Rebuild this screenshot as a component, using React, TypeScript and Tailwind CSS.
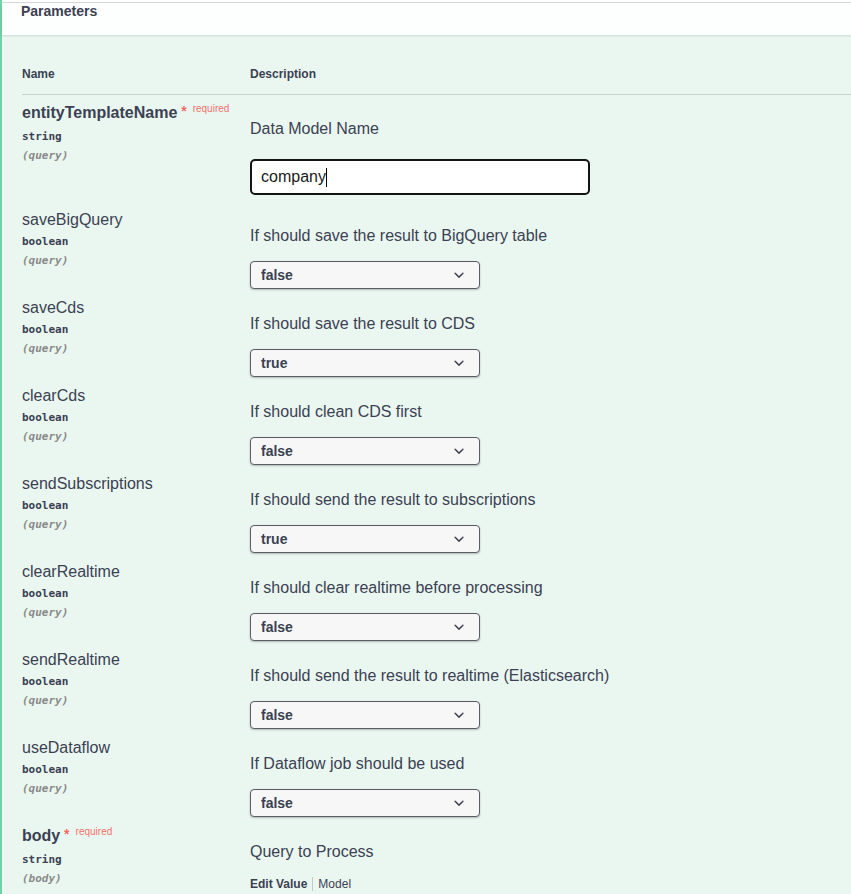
import React from "react";

type Row = { name: string; type: string; inn: string; desc: string; value: string };

const rows: Row[] = [
  { name: "saveBigQuery", type: "boolean", inn: "(query)", desc: "If should save the result to BigQuery table", value: "false" },
  { name: "saveCds", type: "boolean", inn: "(query)", desc: "If should save the result to CDS", value: "true" },
  { name: "clearCds", type: "boolean", inn: "(query)", desc: "If should clean CDS first", value: "false" },
  { name: "sendSubscriptions", type: "boolean", inn: "(query)", desc: "If should send the result to subscriptions", value: "true" },
  { name: "clearRealtime", type: "boolean", inn: "(query)", desc: "If should clear realtime before processing", value: "false" },
  { name: "sendRealtime", type: "boolean", inn: "(query)", desc: "If should send the result to realtime (Elasticsearch)", value: "false" },
  { name: "useDataflow", type: "boolean", inn: "(query)", desc: "If Dataflow job should be used", value: "false" },
];

const mono = "font-['DejaVu_Sans_Mono','Liberation_Mono',monospace]";

function NameCol({ name, type, inn, required }: { name: string; type: string; inn: string; required?: boolean }) {
  return (
    <div className="w-[228px] shrink-0">
      <div className={`text-[16px] leading-[20px] whitespace-nowrap ${required ? "font-bold" : ""}`}>
        {name}
        {required && (
          <>
            <span className="text-[rgba(255,0,0,0.6)] text-[14px] font-bold relative top-[-2px]">&nbsp;*</span>
            <span className="text-[rgba(255,0,0,0.6)] text-[10px] font-normal relative top-[-6px] pl-[6px]">required</span>
          </>
        )}
      </div>
      <div className={`${mono} text-[11px] leading-[16px] font-bold mt-[4px]`}>{type}</div>
      <div className={`${mono} text-[11px] leading-[16px] font-bold italic text-[#8a8a8a] mt-[3px]`}>{inn}</div>
    </div>
  );
}

function Select({ value }: { value: string }) {
  return (
    <div className="w-[230px] h-[28px] border border-[#5a5d66] rounded-[4px] bg-[#f7f7f7] shadow-[0_1px_2px_rgba(0,0,0,0.25)] flex items-center justify-between pl-[10px] pr-[10px]">
      <span className="text-[14px] font-bold leading-[16px]">{value}</span>
      <svg width="20" height="20" viewBox="0 0 20 20">
        <path
          fill="#3b4151"
          d="M13.418 7.859a.695.695 0 01.978 0 .68.68 0 010 .969l-3.908 3.83a.697.697 0 01-.979 0l-3.908-3.83a.68.68 0 010-.969.695.695 0 01.978 0L10 11l3.418-3.141z"
        />
      </svg>
    </div>
  );
}

export default function App() {
  return (
    <div className="w-[851px] h-[894px] overflow-hidden bg-white text-[#3b4151] font-['Liberation_Sans',Arial,sans-serif]">
      <div className="h-full border-l-2 border-[#6fd3a6] flex flex-col">
        <div className="h-[2px] bg-white" />
        <div className="h-[1px] bg-[#d9d9d9]" />
        <div className="h-[32px] bg-[#fdfefe] shadow-[0_1px_2px_rgba(0,0,0,0.12)] relative z-10 pl-[19px]">
          <div className="text-[14px] font-bold leading-[16px]">Parameters</div>
        </div>
        <div className="flex-1 bg-[#eaf7f1] pl-[20px]">
          <div className="pt-[31px] pb-[12px] border-b border-[#c6d3ce] flex text-[12px] font-bold leading-[16px]">
            <div className="w-[228px]">Name</div>
            <div>Description</div>
          </div>
          <div className="mt-[8px] flex h-[107px]">
            <NameCol name="entityTemplateName" type="string" inn="(query)" required />
            <div>
              <div className="text-[16px] leading-[20px] mt-[16px]">Data Model Name</div>
              <div className="mt-[20px] w-[340px] h-[36px] border-2 border-[#141414] rounded-[5px] bg-white flex items-center pl-[9px]">
                <span className="text-[16px] leading-[20px] text-[#1a1a1a]">company</span>
                <span className="w-[1px] h-[19px] bg-black" />
              </div>
            </div>
          </div>
          {rows.map((r) => (
            <div key={r.name} className="flex h-[88px]">
              <NameCol name={r.name} type={r.type} inn={r.inn} />
              <div>
                <div className="text-[16px] leading-[20px] mt-[16px] whitespace-nowrap">{r.desc}</div>
                <div className="mt-[15px]">
                  <Select value={r.value} />
                </div>
              </div>
            </div>
          ))}
          <div className="flex">
            <NameCol name="body" type="string" inn="(body)" required />
            <div>
              <div className="text-[16px] leading-[20px] mt-[16px]">Query to Process</div>
              <div className="mt-[14px] flex items-center text-[12px] leading-[16px]">
                <span className="font-bold">Edit Value</span>
                <span className="w-[1px] h-[14px] bg-[#c5c9c7] mx-[5px]" />
                <span>Model</span>
              </div>
            </div>
          </div>
        </div>
      </div>
    </div>
  );
}
